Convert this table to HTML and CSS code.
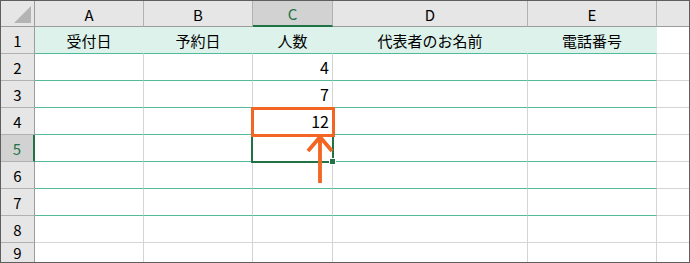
FILE: index.html
```html
<!DOCTYPE html>
<html lang="ja">
  <head>
    <meta charset="UTF-8" />
    <title>予約表</title>
    <link rel="stylesheet" href="styles.css">
  </head>
  <body>
    <div class="sheet">
      <!-- column headers -->
      <div class="corner"><span class="corner-tri"></span></div>
      <div class="col-head">A</div>
      <div class="col-head">B</div>
      <div class="col-head active">C</div>
      <div class="col-head">D</div>
      <div class="col-head">E</div>
      <div class="col-head last"></div>

      <!-- row 1: titles -->
      <div class="row-head">1</div>
      <div class="cell title">受付日</div>
      <div class="cell title">予約日</div>
      <div class="cell title">人数</div>
      <div class="cell title">代表者のお名前</div>
      <div class="cell title">電話番号</div>
      <div class="cell last"></div>

      <div class="row-head">2</div>
      <div class="cell band"></div>
      <div class="cell band"></div>
      <div class="cell band num">4</div>
      <div class="cell band"></div>
      <div class="cell band"></div>
      <div class="cell last"></div>

      <div class="row-head">3</div>
      <div class="cell band"></div>
      <div class="cell band"></div>
      <div class="cell band num">7</div>
      <div class="cell band"></div>
      <div class="cell band"></div>
      <div class="cell last"></div>

      <div class="row-head">4</div>
      <div class="cell band"></div>
      <div class="cell band"></div>
      <div class="cell band num">12</div>
      <div class="cell band"></div>
      <div class="cell band"></div>
      <div class="cell last"></div>

      <div class="row-head active">5</div>
      <div class="cell band"></div>
      <div class="cell band"></div>
      <div class="cell band"></div>
      <div class="cell band"></div>
      <div class="cell band"></div>
      <div class="cell last"></div>

      <div class="row-head">6</div>
      <div class="cell band"></div>
      <div class="cell band"></div>
      <div class="cell band"></div>
      <div class="cell band"></div>
      <div class="cell band"></div>
      <div class="cell last"></div>

      <div class="row-head">7</div>
      <div class="cell band"></div>
      <div class="cell band"></div>
      <div class="cell band"></div>
      <div class="cell band"></div>
      <div class="cell band"></div>
      <div class="cell last"></div>

      <div class="row-head">8</div>
      <div class="cell"></div>
      <div class="cell"></div>
      <div class="cell"></div>
      <div class="cell"></div>
      <div class="cell"></div>
      <div class="cell last"></div>

      <div class="row-head bottom">9</div>
      <div class="cell bottom"></div>
      <div class="cell bottom"></div>
      <div class="cell bottom"></div>
      <div class="cell bottom"></div>
      <div class="cell bottom"></div>
      <div class="cell bottom last"></div>

      <!-- overlays: active cell, highlight box, arrow -->
      <div class="selection"><span class="fill-handle"></span></div>
      <div class="highlight"></div>
      <svg class="arrow" width="40" height="64" viewBox="0 0 40 64">
        <path d="M20 58 V12 M8 26 L20 12 L32 26" fill="none" stroke="#f26522" stroke-width="3.8" />
      </svg>
    </div>
  </body>
</html>
```

FILE: styles.css
```css
body {
  margin: 0;
  background: #fff;
}
.sheet {
  position: relative;
  width: 690px;
  height: 263px;
  box-sizing: border-box;
  border: 1px solid #5f5f5f;
  display: grid;
  grid-template-columns: 34px 109px 109px 80px 195px 129px 32px;
  grid-template-rows: 26px repeat(8, 27px) 19px;
  font-family: "Noto Sans CJK JP", "Noto Sans", sans-serif;
  font-size: 15px;
  color: #000;
}
.sheet > div {
  box-sizing: border-box;
}

/* headers */
.corner,
.col-head,
.row-head {
  background: #e6e6e6;
  display: flex;
  align-items: center;
  justify-content: center;
  font-size: 15px;
}
.corner {
  position: relative;
  border-right: 1px solid #9c9c9c;
  border-bottom: 1px solid #9c9c9c;
}
.corner-tri {
  position: absolute;
  right: 3px;
  bottom: 3px;
  width: 0;
  height: 0;
  border-left: 17px solid transparent;
  border-bottom: 17px solid #b4b4b4;
}
.col-head {
  border-right: 1px solid #b1b1b1;
  border-bottom: 1px solid #9c9c9c;
  padding-top: 1px;
}
.col-head.last {
  border-right: none;
}
.col-head.active {
  background: #d2d2d2;
  border-bottom: 2px solid #217346;
  color: #217346;
}
.row-head {
  border-right: 1px solid #9c9c9c;
  border-bottom: 1px solid #b1b1b1;
}
.row-head.active {
  background: #d2d2d2;
  border-right: 2px solid #217346;
  color: #217346;
}
.row-head.bottom {
  border-bottom: none;
}

/* cells */
.cell {
  border-right: 1px solid #d4d4d4;
  border-bottom: 1px solid #d4d4d4;
  display: flex;
  align-items: center;
  padding: 0 3px;
}
.cell.last {
  border-right: none;
}
.cell.bottom {
  border-bottom: none;
}
.cell.title {
  background: #dcf2eb;
  border-right-color: #dcf2eb;
  border-bottom-color: #52b99a;
  justify-content: center;
}
.cell.band {
  border-bottom-color: #52b99a;
}
.cell.num {
  justify-content: flex-end;
  font-size: 16px;
}

/* active cell C5 */
.selection {
  position: absolute;
  left: 250px;
  top: 133px;
  width: 83px;
  height: 29px;
  box-sizing: border-box;
  border: 2px solid #217346;
}
.fill-handle {
  position: absolute;
  right: -4px;
  bottom: -4px;
  width: 7px;
  height: 7px;
  box-sizing: border-box;
  background: #217346;
  border: 1px solid #fff;
}

/* orange box on C4 */
.highlight {
  position: absolute;
  left: 250px;
  top: 106px;
  width: 84px;
  height: 30px;
  box-sizing: border-box;
  border: 3px solid #f26522;
}
.arrow {
  position: absolute;
  left: 299px;
  top: 124px;
}
```
